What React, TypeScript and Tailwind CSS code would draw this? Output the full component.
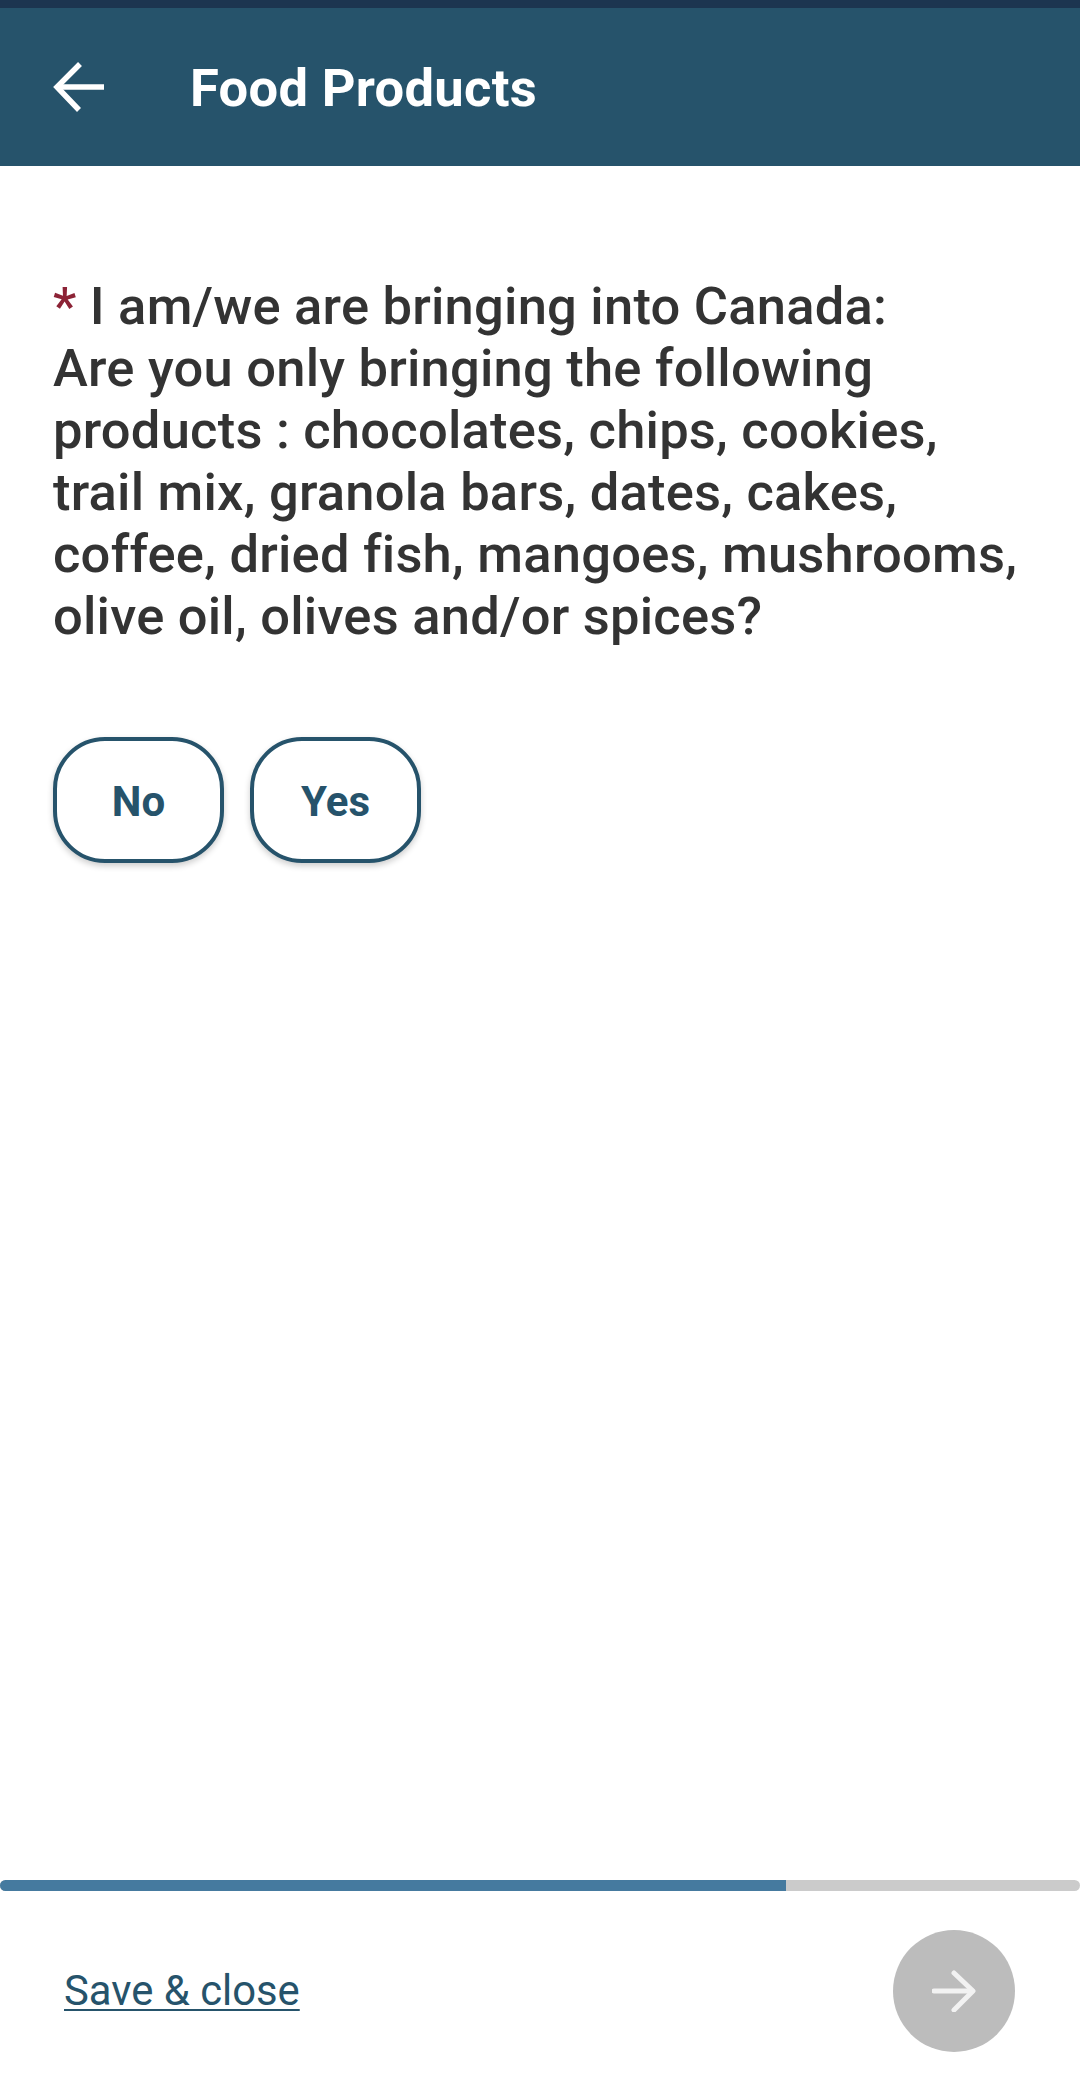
import React from "react";

const FONT = "font-['Roboto',sans-serif]";

const ChoiceButton = ({ label }: { label: string }) => (
  <button className="flex h-[126px] w-[171px] items-center justify-center rounded-[52px] border-[4px] border-[#26536b] bg-white pt-[2px] text-[42px] font-bold text-[#26536b] shadow-[0_3px_6px_rgba(0,0,0,0.2)]">
    {label}
  </button>
);

const App = () => {
  return (
    <div className={`flex h-[2083px] w-[1080px] flex-col overflow-hidden bg-white ${FONT}`}>
      <div className="h-2 bg-[#1c3550]" />
      <header className="flex h-[158px] items-center bg-[#26536b] pl-[53px]">
        <svg width="52" height="50" viewBox="0 0 52 50" fill="none" stroke="white" strokeWidth="5.5">
          <path d="M51 25H4" />
          <path d="M27 2L4 25L26 48" />
        </svg>
        <h1 className="ml-[85px] pt-[2px] text-[52.5px] font-bold tracking-[0.3px] text-white">Food Products</h1>
      </header>

      <main className="flex flex-1 flex-col px-[53px] pt-[109px]">
        <p className="text-[52.5px] font-medium leading-[62px] tracking-[0.22px] text-[#333333]">
          <span className="text-[#8c2336]">*</span> I am/we are bringing into Canada:
          <br />
          Are you only bringing the following products : chocolates, chips, cookies, trail mix, granola bars, dates, cakes, coffee, dried fish, mangoes, mushrooms, olive oil, olives and/or spices?
        </p>
        <div className="mt-[90px] flex gap-[26px]">
          <ChoiceButton label="No" />
          <ChoiceButton label="Yes" />
        </div>
      </main>

      <div className="h-[11px] rounded-full bg-[#cbcbcb]">
        <div className="h-full w-[786px] rounded-l-full bg-[#457a9f]" />
      </div>
      <footer className="flex h-[192px] items-center justify-between pl-[64px] pr-[65px] pt-[7px]">
        <a className="block pt-[2px] text-[41.8px] text-[#26536b] underline decoration-2 underline-offset-[4px]">Save &amp; close</a>
        <button className="flex h-[122px] w-[122px] items-center justify-center rounded-full bg-[#bcbcbc]">
          <svg width="44" height="42" viewBox="0 0 44 42" fill="none" stroke="#f2f2f2" strokeWidth="5" strokeLinecap="round" strokeLinejoin="round">
            <path d="M2 21H40" />
            <path d="M22 3L41 21L22 40" />
          </svg>
        </button>
      </footer>
    </div>
  );
};

export default App;
